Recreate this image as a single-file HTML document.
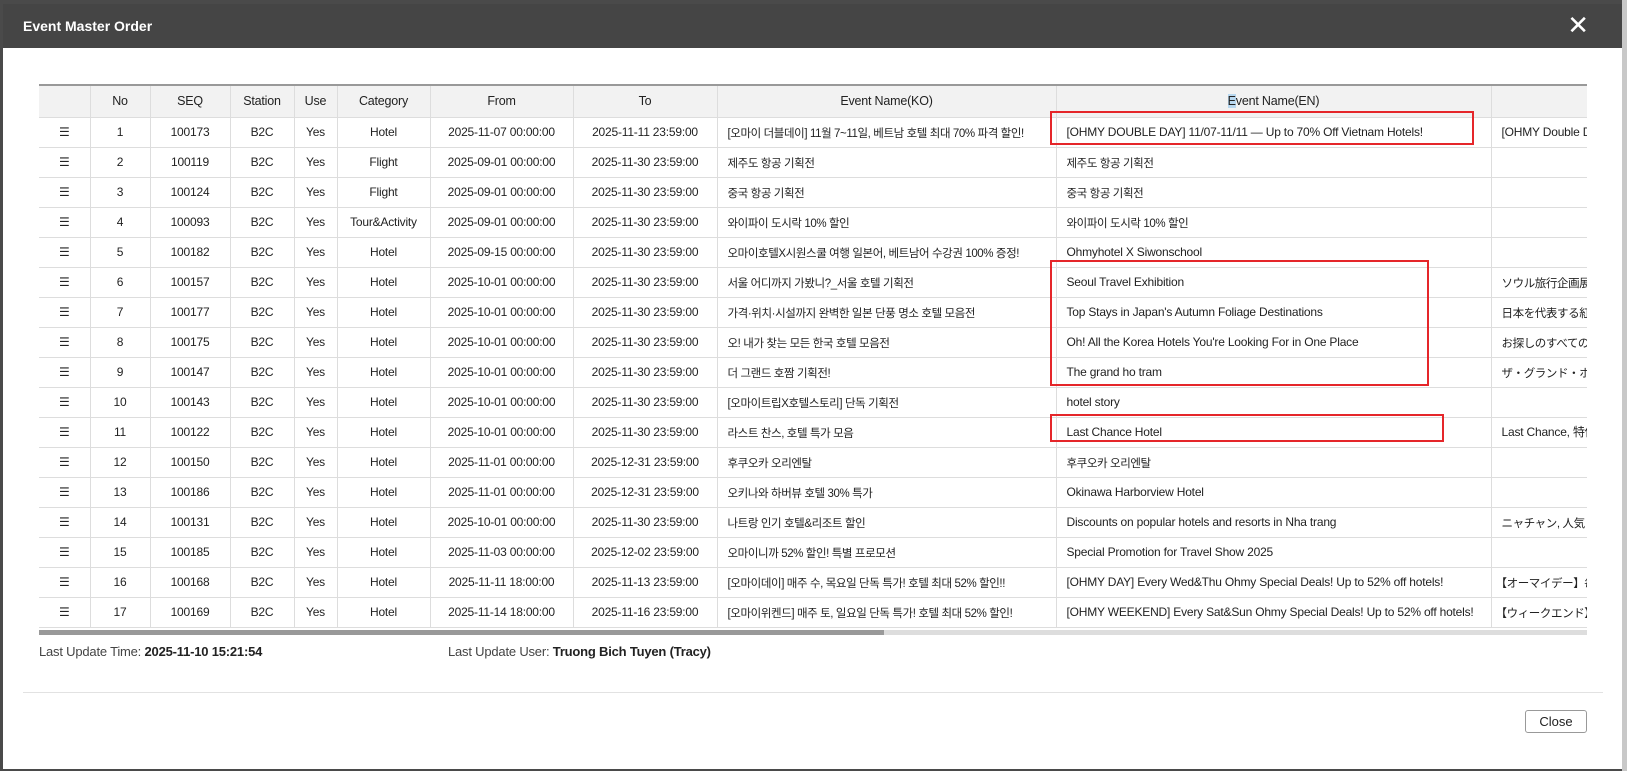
<!DOCTYPE html>
<html><head><meta charset="utf-8"><style>
*{box-sizing:border-box;margin:0;padding:0}
body{width:1627px;height:771px;background:#4a4a4a;position:relative;overflow:hidden;font-family:"Liberation Sans","Noto Sans CJK KR","Noto Sans CJK JP",sans-serif;color:#222}
.rstrip{position:absolute;left:1622px;top:0;width:5px;height:771px;background:#c8c8c8}
.modal{position:absolute;left:3px;top:4px;width:1619px;height:765px;background:#fff}
.hd{height:44px;background:#454545;color:#fff;font-weight:bold;font-size:14px;line-height:44px;padding-left:20px}
.x{position:absolute;right:33px;top:8px;color:#fff;font-size:26px;line-height:26px}
.wrap{position:absolute;left:36px;top:80px;width:1548px;height:551px;overflow:hidden}
table{border-collapse:collapse;table-layout:fixed;width:1548px;font-size:12px;letter-spacing:-0.2px}
th{background:#f2f2f2;font-weight:normal;height:32px;border:1px solid #ddd;border-top:2px solid #999;font-size:12.5px}
td{height:30px;line-height:16px;border:1px solid #ddd;text-align:center;white-space:nowrap;overflow:hidden;vertical-align:middle}
td.l{text-align:left;padding-left:10px}
td.k{font-size:11.5px;letter-spacing:-0.4px;padding-top:3px}
tr td:first-child,tr th:first-child{border-left:none}
.sb{position:absolute;left:0;top:546px;width:1548px;height:5px;background:#ddd}
.sb i{position:absolute;left:0;top:0;width:845px;height:5px;background:#999}
.box{position:absolute;border:2px solid #e5262a}
.info{position:absolute;top:640px;font-size:13px;color:#444;letter-spacing:-0.2px}
.info b{color:#222}
.sep{position:absolute;left:20px;top:688px;width:1580px;height:1px;background:#e2e2e2}
.btn{position:absolute;left:1522px;top:706px;width:62px;height:23px;border:1px solid #999;border-radius:3px;font-size:13px;text-align:center;line-height:21px}
.hl{background:#b8d8f0}
</style></head><body>
<div class="rstrip"></div>
<div class="modal">
<div class="hd">Event Master Order</div>
<div class="x">✕</div>
<div class="wrap">
<table>
<colgroup><col style="width:51px"><col style="width:60px"><col style="width:80px"><col style="width:64px"><col style="width:43px"><col style="width:93px"><col style="width:143px"><col style="width:144px"><col style="width:339px"><col style="width:435px"><col style="width:96px"></colgroup>
<tr><th></th><th>No</th><th>SEQ</th><th>Station</th><th>Use</th><th>Category</th><th>From</th><th>To</th><th>Event Name(KO)</th><th><span class="hl">E</span>vent Name(EN)</th><th></th></tr>
<tr><td>☰</td><td>1</td><td>100173</td><td>B2C</td><td>Yes</td><td>Hotel</td><td>2025-11-07 00:00:00</td><td>2025-11-11 23:59:00</td><td class="l k">[오마이 더블데이] 11월 7~11일, 베트남 호텔 최대 70% 파격 할인!</td><td class="l">[OHMY DOUBLE DAY] 11/07-11/11 — Up to 70% Off Vietnam Hotels!</td><td class="l">[OHMY Double Day</td></tr>
<tr><td>☰</td><td>2</td><td>100119</td><td>B2C</td><td>Yes</td><td>Flight</td><td>2025-09-01 00:00:00</td><td>2025-11-30 23:59:00</td><td class="l k">제주도 항공 기획전</td><td class="l k">제주도 항공 기획전</td><td></td></tr>
<tr><td>☰</td><td>3</td><td>100124</td><td>B2C</td><td>Yes</td><td>Flight</td><td>2025-09-01 00:00:00</td><td>2025-11-30 23:59:00</td><td class="l k">중국 항공 기획전</td><td class="l k">중국 항공 기획전</td><td></td></tr>
<tr><td>☰</td><td>4</td><td>100093</td><td>B2C</td><td>Yes</td><td>Tour&amp;Activity</td><td>2025-09-01 00:00:00</td><td>2025-11-30 23:59:00</td><td class="l k">와이파이 도시락 10% 할인</td><td class="l k">와이파이 도시락 10% 할인</td><td></td></tr>
<tr><td>☰</td><td>5</td><td>100182</td><td>B2C</td><td>Yes</td><td>Hotel</td><td>2025-09-15 00:00:00</td><td>2025-11-30 23:59:00</td><td class="l k">오마이호텔X시원스쿨 여행 일본어, 베트남어 수강권 100% 증정!</td><td class="l">Ohmyhotel X Siwonschool</td><td></td></tr>
<tr><td>☰</td><td>6</td><td>100157</td><td>B2C</td><td>Yes</td><td>Hotel</td><td>2025-10-01 00:00:00</td><td>2025-11-30 23:59:00</td><td class="l k">서울 어디까지 가봤니?_서울 호텔 기획전</td><td class="l">Seoul Travel Exhibition</td><td class="l k">ソウル旅行企画展</td></tr>
<tr><td>☰</td><td>7</td><td>100177</td><td>B2C</td><td>Yes</td><td>Hotel</td><td>2025-10-01 00:00:00</td><td>2025-11-30 23:59:00</td><td class="l k">가격·위치·시설까지 완벽한 일본 단풍 명소 호텔 모음전</td><td class="l">Top Stays in Japan's Autumn Foliage Destinations</td><td class="l k">日本を代表する紅葉</td></tr>
<tr><td>☰</td><td>8</td><td>100175</td><td>B2C</td><td>Yes</td><td>Hotel</td><td>2025-10-01 00:00:00</td><td>2025-11-30 23:59:00</td><td class="l k">오! 내가 찾는 모든 한국 호텔 모음전</td><td class="l">Oh! All the Korea Hotels You're Looking For in One Place</td><td class="l k">お探しのすべての</td></tr>
<tr><td>☰</td><td>9</td><td>100147</td><td>B2C</td><td>Yes</td><td>Hotel</td><td>2025-10-01 00:00:00</td><td>2025-11-30 23:59:00</td><td class="l k">더 그랜드 호짬 기획전!</td><td class="l">The grand ho tram</td><td class="l k">ザ・グランド・ホー</td></tr>
<tr><td>☰</td><td>10</td><td>100143</td><td>B2C</td><td>Yes</td><td>Hotel</td><td>2025-10-01 00:00:00</td><td>2025-11-30 23:59:00</td><td class="l k">[오마이트립X호텔스토리] 단독 기획전</td><td class="l">hotel story</td><td></td></tr>
<tr><td>☰</td><td>11</td><td>100122</td><td>B2C</td><td>Yes</td><td>Hotel</td><td>2025-10-01 00:00:00</td><td>2025-11-30 23:59:00</td><td class="l k">라스트 찬스, 호텔 특가 모음</td><td class="l">Last Chance Hotel</td><td class="l">Last Chance, 特価</td></tr>
<tr><td>☰</td><td>12</td><td>100150</td><td>B2C</td><td>Yes</td><td>Hotel</td><td>2025-11-01 00:00:00</td><td>2025-12-31 23:59:00</td><td class="l k">후쿠오카 오리엔탈</td><td class="l k">후쿠오카 오리엔탈</td><td></td></tr>
<tr><td>☰</td><td>13</td><td>100186</td><td>B2C</td><td>Yes</td><td>Hotel</td><td>2025-11-01 00:00:00</td><td>2025-12-31 23:59:00</td><td class="l k">오키나와 하버뷰 호텔 30% 특가</td><td class="l">Okinawa Harborview Hotel</td><td></td></tr>
<tr><td>☰</td><td>14</td><td>100131</td><td>B2C</td><td>Yes</td><td>Hotel</td><td>2025-10-01 00:00:00</td><td>2025-11-30 23:59:00</td><td class="l k">나트랑 인기 호텔&amp;리조트 할인</td><td class="l">Discounts on popular hotels and resorts in Nha trang</td><td class="l k">ニャチャン, 人気</td></tr>
<tr><td>☰</td><td>15</td><td>100185</td><td>B2C</td><td>Yes</td><td>Hotel</td><td>2025-11-03 00:00:00</td><td>2025-12-02 23:59:00</td><td class="l k">오마이니까 52% 할인! 특별 프로모션</td><td class="l">Special Promotion for Travel Show 2025</td><td></td></tr>
<tr><td>☰</td><td>16</td><td>100168</td><td>B2C</td><td>Yes</td><td>Hotel</td><td>2025-11-11 18:00:00</td><td>2025-11-13 23:59:00</td><td class="l k">[오마이데이] 매주 수, 목요일 단독 특가! 호텔 최대 52% 할인!!</td><td class="l">[OHMY DAY] Every Wed&amp;Thu Ohmy Special Deals! Up to 52% off hotels!</td><td class="l k" style="padding-left:4px">【オーマイデー】毎</td></tr>
<tr><td>☰</td><td>17</td><td>100169</td><td>B2C</td><td>Yes</td><td>Hotel</td><td>2025-11-14 18:00:00</td><td>2025-11-16 23:59:00</td><td class="l k">[오마이위켄드] 매주 토, 일요일 단독 특가! 호텔 최대 52% 할인!</td><td class="l">[OHMY WEEKEND] Every Sat&amp;Sun Ohmy Special Deals! Up to 52% off hotels!</td><td class="l k" style="padding-left:4px">【ウィークエンド】</td></tr>
</table>
<div class="sb"><i></i></div>
</div>
<div class="box" style="left:1047px;top:107px;width:424px;height:34px"></div>
<div class="box" style="left:1047px;top:256px;width:379px;height:126px"></div>
<div class="box" style="left:1047px;top:410px;width:394px;height:28px"></div>
<div class="info" style="left:36px">Last Update Time: <b>2025-11-10 15:21:54</b></div>
<div class="info" style="left:445px">Last Update User: <b>Truong Bich Tuyen (Tracy)</b></div>
<div class="sep"></div>
<div class="btn">Close</div>
</div>
</body></html>
